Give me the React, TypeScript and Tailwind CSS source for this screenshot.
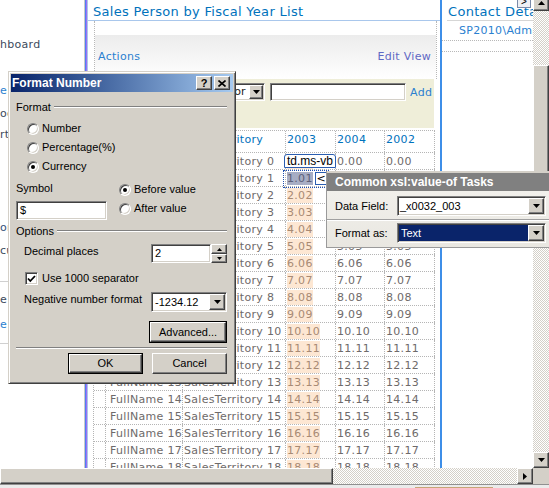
import React from "react";

const raised =
  "bg-[#d4d0c8] border border-t-white border-l-white border-r-[#404040] border-b-[#404040] shadow-[inset_-1px_-1px_0_#808080]";
const sunken =
  "bg-white border border-t-[#808080] border-l-[#808080] border-r-white border-b-white shadow-[inset_1px_1px_0_#404040,inset_-1px_-1px_0_#d4d0c8]";
const checker =
  "bg-[image:repeating-conic-gradient(#d4d0c8_0_25%,#ffffff_0_50%)] bg-[length:2px_2px]";

function Tri({ dir = "down" }: { dir?: "down" | "up" | "right" }) {
  if (dir === "right")
    return (
      <svg width="4" height="7" viewBox="0 0 4 7" className="block">
        <path d="M0 0V7L4 3.5Z" fill="#000" />
      </svg>
    );
  return (
    <svg width="7" height="4" viewBox="0 0 7 4" className="block">
      <path d={dir === "up" ? "M0 4H7L3.5 0Z" : "M0 0H7L3.5 4Z"} fill="#000" />
    </svg>
  );
}

function Radio({ checked = false }: { checked?: boolean }) {
  return (
    <div className="w-[12px] h-[12px] shrink-0 rounded-full bg-white border border-t-[#808080] border-l-[#808080] border-r-white border-b-white shadow-[inset_1px_1px_0_#404040,inset_-1px_-1px_0_#d4d0c8] flex items-center justify-center">
      {checked && <div className="w-[4px] h-[4px] rounded-full bg-black" />}
    </div>
  );
}

function GroupHead({ label }: { label: string }) {
  return (
    <div className="h-[14px] flex items-center gap-[3px]">
      <span className="leading-[14px]">{label}</span>
      <div className="flex-1 h-[2px] border-t border-t-[#808080] border-b border-b-white" />
    </div>
  );
}

const cellBase =
  "shrink-0 h-full border-r border-dotted border-[#b5b5b5] whitespace-nowrap overflow-hidden";

export default function App() {
  const rows = Array.from({ length: 19 }, (_, k) => k);
  const val = (k: number) => `${k}.${String(k).padStart(2, "0")}`;

  return (
    <div className="relative w-[549px] h-[488px] overflow-hidden bg-white font-['DejaVu_Sans',Verdana,sans-serif] text-[11px] tracking-[0.3px]">
      <div className="flex h-[468px]">
        {/* left navigation */}
        <div className="w-[84px] shrink-0 flex flex-col overflow-hidden whitespace-nowrap leading-[16px]">
          <div className="mt-[37px] h-[16px] text-[#3c4a5c]">hboard</div>
          <div className="mt-[30px] h-[16px] text-[#2b7fd0]">e</div>
          <div className="mt-[7px] h-[16px] text-[#3c4a5c]">ocuments</div>
          <div className="mt-[5px] h-[16px] text-[#3c4a5c]">rts</div>
          <div className="mt-[77px] h-[16px] text-[#34507a]">ontacts</div>
          <div className="mt-[7px] h-[16px] text-[#3c4a5c]">custom</div>
          <div className="mt-[22px] h-[1px] bg-[#d0d0d0]" />
          <div className="mt-[10px] h-[16px] text-[#3c4a5c]">e</div>
          <div className="mt-[9px] h-[16px] text-[#2b7fd0]">e '</div>
          <div className="mt-[10px] h-[1px] bg-[#d0d0d0]" />
        </div>
        <div className="w-[1px] shrink-0 bg-[#c8c8c8]" />
        <div className="w-[1px] shrink-0 bg-[#4f7df5]" />
        <div className="w-[1px] shrink-0 bg-[#a070f0]" />

        {/* main web part */}
        <div className="w-[353px] shrink-0 flex flex-col border-l border-l-[#a9c7ec] overflow-hidden">
          <div className="h-[21px] shrink-0 border-b border-b-[#a9c7ec] pl-[5px] pt-[3px] leading-[17px] text-[13px] text-[#0072bc] whitespace-nowrap">
            Sales Person by Fiscal Year List
          </div>
          <div className="ml-[6px] mr-[3px] shrink-0 border-l border-r border-dotted border-[#b8b8b8] flex flex-col">
            <div className="h-[14px]" />
            <div className="h-[44px] bg-linear-to-b from-[#ececec] to-white flex items-center justify-between pl-[3px] pr-[5px]">
              <span className="text-[#2b7fd0]">Actions</span>
              <span className="text-[#5f68c4]">Edit View</span>
            </div>
          </div>
          <div className="h-[49px] shrink-0 mr-[6px] bg-[#efeed9] flex items-start pt-[4px]">
            <div className={`ml-[124px] w-[53px] h-[18px] ${sunken} flex items-center`}>
              <span className="flex-1 text-[#222] overflow-hidden whitespace-nowrap leading-[16px] tracking-normal">Editor</span>
              <div className={`${raised} w-[14px] h-[14px] mr-[1px] flex items-center justify-center`}>
                <Tri />
              </div>
            </div>
            <div className={`ml-[5px] w-[136px] h-[18px] ${sunken}`} />
            <span className="ml-[4px] mt-[2px] text-[#2b7fd0] leading-[16px]">Add</span>
          </div>
          <div className="h-[2px] shrink-0" />
          <div className="ml-[5px] w-[342px] shrink-0 border-l border-dotted border-[#b5b5b5] flex flex-col">
            <div className="flex h-[23px] shrink-0 border-t border-b border-dotted border-[#b5b5b5] text-[#0072bc] leading-[17px]">
              <div className={`${cellBase} w-[12px]`} />
              <div className={`${cellBase} w-[77px] pl-[4px]`}>FullName</div>
              <div className={`${cellBase} w-[103px] pl-[1px]`}>SalesTerritory</div>
              <div className={`${cellBase} w-[50px] pl-[1px]`}>2003</div>
              <div className={`${cellBase} w-[49px] pl-[1px]`}>2004</div>
              <div className={`${cellBase} w-[50px] pl-[1px]`}>2002</div>
            </div>
            {rows.map((k) => (
              <div
                key={k}
                className="flex h-[17px] shrink-0 border-b border-dotted border-[#b5b5b5] text-[#6e6a6a] leading-[18px]"
              >
                <div className={`${cellBase} w-[12px]`} />
                <div className={`${cellBase} w-[77px] pl-[4px]`}>FullName {k}</div>
                <div className={`${cellBase} w-[103px] pl-[1px]`}>SalesTerritory {k}</div>
                <div className={`${cellBase} w-[50px] pl-[1px] pt-[1px] flex items-center`}>
                  {k === 1 ? (
                    <>
                      <span className="bg-[#a7adc4] text-[#5c6078] leading-[13px]">{val(k)}</span>
                      <span className="ml-[2px] w-[13px] h-[13px] border border-[#2a5db0] bg-white text-black flex items-center justify-center leading-none text-[11px]">
                        &lt;
                      </span>
                    </>
                  ) : (
                    <span className="bg-[#fde7d3] text-[#a88a74] leading-[15px]">{val(k)}</span>
                  )}
                </div>
                <div className={`${cellBase} w-[49px] pl-[1px]`}>{val(k)}</div>
                <div className={`${cellBase} w-[50px] pl-[1px]`}>{val(k)}</div>
              </div>
            ))}
          </div>
        </div>

        <div className="w-[2px] shrink-0 bg-[#3d8ee8]" />

        {/* contact details web part */}
        <div className="w-[91px] shrink-0 flex flex-col overflow-hidden whitespace-nowrap">
          <div className="ml-[5px] h-[21px] shrink-0 border-b border-[#d6d6d6] pl-[1px] pt-[3px] leading-[17px] text-[13px] text-[#0072bc]">
            Contact Details
          </div>
          <div className="h-[20px] shrink-0 border-b border-dotted border-[#b8b8b8] pl-[17px] leading-[19px] text-[#2b7fd0]">
            SP2010\Administrator
          </div>
          <div className="h-[11px] shrink-0 border-b border-dotted border-[#b8b8b8]" />
        </div>

        {/* vertical scrollbar */}
        <div className="w-[16px] shrink-0 flex flex-col overflow-hidden">
          <div className={`${raised} h-[16px] -mt-[5px] shrink-0 flex items-center justify-center`}>
            <Tri dir="up" />
          </div>
          <div className={`${checker} h-[54px] shrink-0`} />
          <div className={`${raised} h-[135px] shrink-0`} />
          <div className={`${checker} flex-1`} />
          <div className={`${raised} h-[16px] shrink-0 flex items-center justify-center`}>
            <Tri />
          </div>
        </div>
      </div>

      {/* horizontal scrollbar */}
      <div className="flex h-[16px]">
        <div className={`${raised} w-[333px] shrink-0`} />
        <div className={`${checker} flex-1`} />
        <div className={`${raised} w-[16px] shrink-0 flex items-center justify-center`}>
          <Tri dir="right" />
        </div>
        <div className="w-[16px] shrink-0 bg-[#d4d0c8]" />
      </div>
      <div className="h-[4px] bg-[#ebebeb] border-t border-t-[#909090] flex items-end">
        <div className="ml-[415px] w-[78px] h-[1px] bg-[#c8a478]" />
      </div>

      {/* small chevron button at top */}
      <div className="absolute left-[517px] top-[-5px] w-[14px] h-[13px] border border-[#7a8aa8] bg-[#eef0f4] flex items-end justify-center text-[10px] leading-[10px] text-black tracking-normal font-['Liberation_Sans',Arial,sans-serif]">
        &gt;
      </div>

      {/* selection on row 1, 2003 cell */}
      <div className="absolute left-[283px] top-[170px] w-[46px] h-[18px] border border-dotted border-[#2050b0]" />

      {/* tag */}
      <div className="absolute left-[284px] top-[154px] w-[52px] h-[14px] bg-white border border-[#2a5db0] rounded-t-[3px] pl-[2px] text-[12px] leading-[12px] text-black tracking-normal font-['Liberation_Sans',Arial,sans-serif] whitespace-nowrap overflow-hidden">
        td.ms-vb
      </div>

      {/* Common xsl:value-of Tasks panel */}
      <div className="absolute left-[326px] top-[171px] w-[223px] h-[77px] flex flex-col border-l border-l-[#9a9a9a] border-b border-b-[#9a9a9a] bg-linear-to-b from-[#f4f3ef] to-[#e9e7e1] font-['Liberation_Sans',Arial,sans-serif] text-[11px] tracking-normal text-black">
        <div className="h-[2px] shrink-0 bg-[#d4d0c8]" />
        <div className="h-[18px] shrink-0 bg-[#808080] text-white font-bold text-[12px] flex items-center pl-[8px] whitespace-nowrap">
          Common xsl:value-of Tasks
        </div>
        <div className="flex items-center pt-[5px] pb-[3px] pl-[8px]">
          <span className="w-[62px] shrink-0">Data Field:</span>
          <div className={`${sunken} w-[149px] h-[20px] flex items-center`}>
            <span className="flex-1 pl-[2px] whitespace-nowrap overflow-hidden">_x0032_003</span>
            <div className={`${raised} w-[16px] h-[16px] mr-[1px] flex items-center justify-center`}>
              <Tri />
            </div>
          </div>
        </div>
        <div className="h-[2px] shrink-0 border-t border-t-[#a0a0a0] border-b border-b-white" />
        <div className="flex items-center pt-[2px] pb-[4px] pl-[8px]">
          <span className="w-[62px] shrink-0">Format as:</span>
          <div className={`${sunken} w-[149px] h-[20px] flex items-center p-[1px]`}>
            <span className="flex-1 h-full bg-[#0a246a] text-white pl-[2px] flex items-center">Text</span>
            <div className={`${raised} w-[16px] h-[16px] flex items-center justify-center`}>
              <Tri />
            </div>
          </div>
        </div>
      </div>

      {/* Format Number dialog */}
      <div className="absolute left-[8px] top-[71px] w-[228px] h-[313px] bg-[#d4d0c8] border border-t-[#d4d0c8] border-l-[#d4d0c8] border-r-[#404040] border-b-[#404040] shadow-[inset_1px_1px_0_#ffffff,inset_-1px_-1px_0_#808080] p-[2px] flex flex-col font-['Liberation_Sans',Arial,sans-serif] text-[11px] tracking-normal text-black">
        <div className="h-[18px] shrink-0 bg-linear-to-r from-[#0a246a] to-[#a6caf0] flex items-center pl-[1px] pr-[3px]">
          <span className="flex-1 text-white font-bold text-[12px] whitespace-nowrap">Format Number</span>
          <div className={`${raised} w-[16px] h-[14px] flex items-center justify-center font-bold text-[11px] leading-none`}>?</div>
          <div className={`${raised} ml-[2px] w-[16px] h-[14px] flex items-center justify-center`}>
            <svg width="8" height="7" viewBox="0 0 8 7" className="block">
              <path d="M0.5 0.5L7.5 6.5M7.5 0.5L0.5 6.5" stroke="#000" strokeWidth="1.6" />
            </svg>
          </div>
        </div>

        <div className="flex flex-col pl-[5px] pr-[6px]">
          <div className="mt-[8px]">
            <GroupHead label="Format" />
          </div>
          <div className="mt-[5px] flex flex-col pl-[11px]">
            <div className="h-[19px] flex items-center gap-[3px]">
              <Radio />
              <span>Number</span>
            </div>
            <div className="h-[19px] flex items-center gap-[3px]">
              <Radio />
              <span>Percentage(%)</span>
            </div>
            <div className="h-[19px] flex items-center gap-[3px]">
              <Radio checked />
              <span>Currency</span>
            </div>
          </div>

          <div className="flex">
            <div className="w-[91px] flex flex-col">
              <div className="mt-[5px] h-[14px] leading-[14px]">Symbol</div>
              <div className={`${sunken} mt-[6px] h-[19px] pl-[3px] flex items-center`}>$</div>
            </div>
            <div className="ml-[12px] mt-[4px] flex flex-col">
              <div className="h-[19px] flex items-center gap-[3px]">
                <Radio checked />
                <span>Before value</span>
              </div>
              <div className="h-[19px] flex items-center gap-[3px]">
                <Radio />
                <span>After value</span>
              </div>
            </div>
          </div>

          <div className="mt-[4px]">
            <GroupHead label="Options" />
          </div>

          <div className="mt-[6px] h-[19px] flex pl-[8px]">
            <span className="flex-1 self-start leading-[14px]">Decimal places</span>
            <div className={`${sunken} w-[60px] h-full pl-[3px] flex items-center`}>2</div>
            <div className="w-[16px] h-full flex flex-col">
              <div className={`${raised} h-[10px] flex items-center justify-center`}>
                <svg width="5" height="3" viewBox="0 0 5 3" className="block">
                  <path d="M0 3H5L2.5 0Z" fill="#000" />
                </svg>
              </div>
              <div className={`${raised} h-[9px] flex items-center justify-center`}>
                <svg width="5" height="3" viewBox="0 0 5 3" className="block">
                  <path d="M0 0H5L2.5 3Z" fill="#000" />
                </svg>
              </div>
            </div>
          </div>

          <div className="mt-[9px] h-[13px] flex items-center pl-[9px] gap-[4px]">
            <div className="w-[13px] h-[13px] shrink-0 bg-white border border-t-[#808080] border-l-[#808080] border-r-white border-b-white shadow-[inset_1px_1px_0_#404040,inset_-1px_-1px_0_#d4d0c8] flex items-center justify-center">
              <svg width="9" height="8" viewBox="0 0 9 8" className="block">
                <path d="M1 3.5L3.3 6L8 1" stroke="#000" strokeWidth="1.8" fill="none" />
              </svg>
            </div>
            <span>Use 1000 separator</span>
          </div>

          <div className="mt-[7px] h-[20px] flex pl-[8px]">
            <span className="flex-1 self-start leading-[14px] whitespace-nowrap">Negative number format</span>
            <div className={`${sunken} w-[76px] h-full flex items-center`}>
              <span className="flex-1 pl-[3px]">-1234.12</span>
              <div className={`${raised} w-[16px] h-[16px] mr-[1px] flex items-center justify-center`}>
                <Tri />
              </div>
            </div>
          </div>

          <div className="mt-[9px] self-end w-[78px] h-[22px] border border-black">
            <div className={`${raised} w-full h-full flex items-center justify-center`}>Advanced...</div>
          </div>

          <div className="mt-[4px] h-[2px] border-t border-t-[#808080] border-b border-b-white" />

          <div className="mt-[4px] h-[21px] flex justify-end gap-[9px]">
            <div className="w-[75px] h-full border border-black">
              <div className={`${raised} w-full h-full flex items-center justify-center`}>OK</div>
            </div>
            <div className={`${raised} w-[75px] h-full flex items-center justify-center`}>Cancel</div>
          </div>
        </div>
      </div>
    </div>
  );
}
